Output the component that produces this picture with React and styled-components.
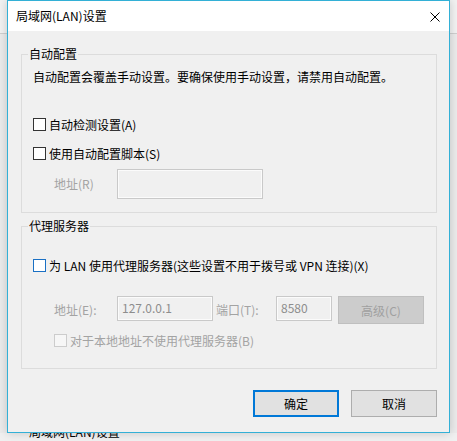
import React from "react";
import styled, { createGlobalStyle } from "styled-components";

const GlobalStyle = createGlobalStyle`
  html, body {
    margin: 0;
    padding: 0;
    background: #ebebeb;
  }
  body {
    font-family: "Noto Sans CJK SC", "Noto Sans", sans-serif;
    font-size: 12px;
    color: #000;
  }
`;

const App = () => {
    return (
        <Page>
            <GlobalStyle />
            <Stage>
                <Dialog>
                    <TitleBar>
                        <Title>局域网(LAN)设置</Title>
                        <CloseIcon width="10" height="10" viewBox="0 0 10 10">
                            <path d="M0.5 0.5 L9.5 9.5 M9.5 0.5 L0.5 9.5" stroke="#000" strokeWidth="1" />
                        </CloseIcon>
                    </TitleBar>

                    <Body>
                        <Group $top={15}>
                            <Legend>自动配置</Legend>
                            <Note>自动配置会覆盖手动设置。要确保使用手动设置，请禁用自动配置。</Note>

                            <CheckRow $top={31}>
                                <Box />
                                <span>自动检测设置(A)</span>
                            </CheckRow>
                            <CheckRow $top={13}>
                                <Box />
                                <span>使用自动配置脚本(S)</span>
                            </CheckRow>

                            <FieldRow $top={8} $bottom={13}>
                                <FieldLabel $width={63}>地址(R)</FieldLabel>
                                <TextBox $width={146} $height={30} />
                            </FieldRow>
                        </Group>

                        <Group $top={5}>
                            <Legend>代理服务器</Legend>

                            <CheckRow $top={23}>
                                <Box $focus />
                                <span>为 LAN 使用代理服务器(这些设置不用于拨号或 VPN 连接)(X)</span>
                            </CheckRow>

                            <FieldRow $top={23}>
                                <FieldLabel $width={63}>地址(E):</FieldLabel>
                                <TextBox $width={96} $height={25}>127.0.0.1</TextBox>
                                <FieldLabel $width={60} $gap={3}>端口(T):</FieldLabel>
                                <TextBox $width={56} $height={25}>8580</TextBox>
                                <AdvancedButton>高级(C)</AdvancedButton>
                            </FieldRow>

                            <CheckRow $top={8} $bottom={20} $indent={21} $disabled>
                                <Box $disabled />
                                <span>对于本地地址不使用代理服务器(B)</span>
                            </CheckRow>
                        </Group>

                        <Actions>
                            <Button $primary>确定</Button>
                            <Button>取消</Button>
                        </Actions>
                    </Body>
                </Dialog>
            </Stage>

            {/* the parent window peeking out under the dialog */}
            <BackStrip>
                <BackTitle>局域网(LAN)设置</BackTitle>
            </BackStrip>
        </Page>
    );
};

export default App;

const Page = styled.div`
  width: 457px;
  height: 441px;
  overflow: hidden;
  display: flex;
  flex-direction: column;
  background: linear-gradient(#f2f2f2 0 33px, #cfcfcf 33px 34px, #ebebeb 34px);
`;

const Stage = styled.div`
  display: flex;
  padding-left: 7px;
`;

const Dialog = styled.div`
  width: 441px;
  height: 431px;
  border: 1px solid #33b0d6;
  background: #f0f0f0;
  box-shadow: 0 0 9px rgba(0, 0, 0, 0.18);
  display: flex;
  flex-direction: column;
  position: relative;
  z-index: 1;
`;

const TitleBar = styled.div`
  height: 30px;
  background: #fff;
  display: flex;
  align-items: center;
  justify-content: space-between;
  padding: 0 9px 0 8px;
`;

const Title = styled.span`
  font-size: 12px;
  line-height: 16px;
`;

const CloseIcon = styled.svg`
  display: block;
  margin-top: 1px;
`;

const Body = styled.div`
  flex: 1;
  display: flex;
  flex-direction: column;
  padding: 0 12px 0 13px;
`;

const Group = styled.fieldset`
  margin: ${(p) => p.$top}px 0 0 0;
  padding: 0 11px;
  border: 1px solid #dcdcdc;
  min-width: 0;
  display: flex;
  flex-direction: column;
  align-items: flex-start;
`;

const Legend = styled.legend`
  margin-left: -5px;
  padding: 0 1px;
  line-height: 16px;
  font-size: 12px;
`;

const Note = styled.div`
  margin-top: 7px;
  line-height: 16px;
  white-space: nowrap;
`;

const CheckRow = styled.label`
  display: flex;
  align-items: center;
  gap: 3px;
  height: 16px;
  margin-top: ${(p) => p.$top}px;
  margin-bottom: ${(p) => p.$bottom || 0}px;
  margin-left: ${(p) => p.$indent || 0}px;
  color: ${(p) => (p.$disabled ? "#a3a3a3" : "#000")};
  white-space: nowrap;
`;

const Box = styled.span`
  width: 11px;
  height: 11px;
  flex: none;
  border: 1px solid ${(p) => (p.$focus ? "#1a70c4" : p.$disabled ? "#cccccc" : "#333")};
  background: ${(p) => (p.$disabled ? "#f6f6f6" : "#fff")};
`;

const FieldRow = styled.div`
  display: flex;
  align-items: flex-start;
  margin-top: ${(p) => p.$top}px;
  margin-bottom: ${(p) => p.$bottom || 0}px;
  padding-left: 21px;
`;

const FieldLabel = styled.span`
  width: ${(p) => p.$width}px;
  margin-left: ${(p) => p.$gap || 0}px;
  flex: none;
  color: #a3a3a3;
  line-height: 16px;
  align-self: center;
  white-space: nowrap;
`;

const TextBox = styled.div`
  box-sizing: border-box;
  width: ${(p) => p.$width}px;
  height: ${(p) => p.$height}px;
  flex: none;
  border: 1px solid #c9c9c9;
  box-shadow: inset 0 0 0 1px #fbfbfb;
  background: #f0f0f0;
  color: #8d8d8d;
  padding: 0 4px;
  line-height: ${(p) => p.$height - 3}px;
`;

const AdvancedButton = styled.div`
  box-sizing: border-box;
  width: 86px;
  height: 28px;
  margin-left: 6px;
  flex: none;
  border: 1px solid #bfbfbf;
  background: #cccccc;
  color: #a0a0a0;
  display: flex;
  align-items: center;
  justify-content: center;
`;

const Actions = styled.div`
  display: flex;
  justify-content: flex-end;
  gap: 12px;
  margin-top: 21px;
`;

const Button = styled.button`
  box-sizing: border-box;
  width: 86px;
  height: 27px;
  padding: 0;
  font-family: inherit;
  font-size: 12px;
  color: #000;
  background: #e1e1e1;
  border: ${(p) => (p.$primary ? "2px solid #0078d7" : "1px solid #adadad")};
  border-radius: 0;
`;

const BackStrip = styled.div`
  height: 9px;
  overflow: hidden;
  background: #f0f0f0;
  padding-left: 29px;
`;

const BackTitle = styled.div`
  margin-top: -9px;
  font-size: 12px;
  line-height: 16px;
  color: #000;
  white-space: nowrap;
`;
